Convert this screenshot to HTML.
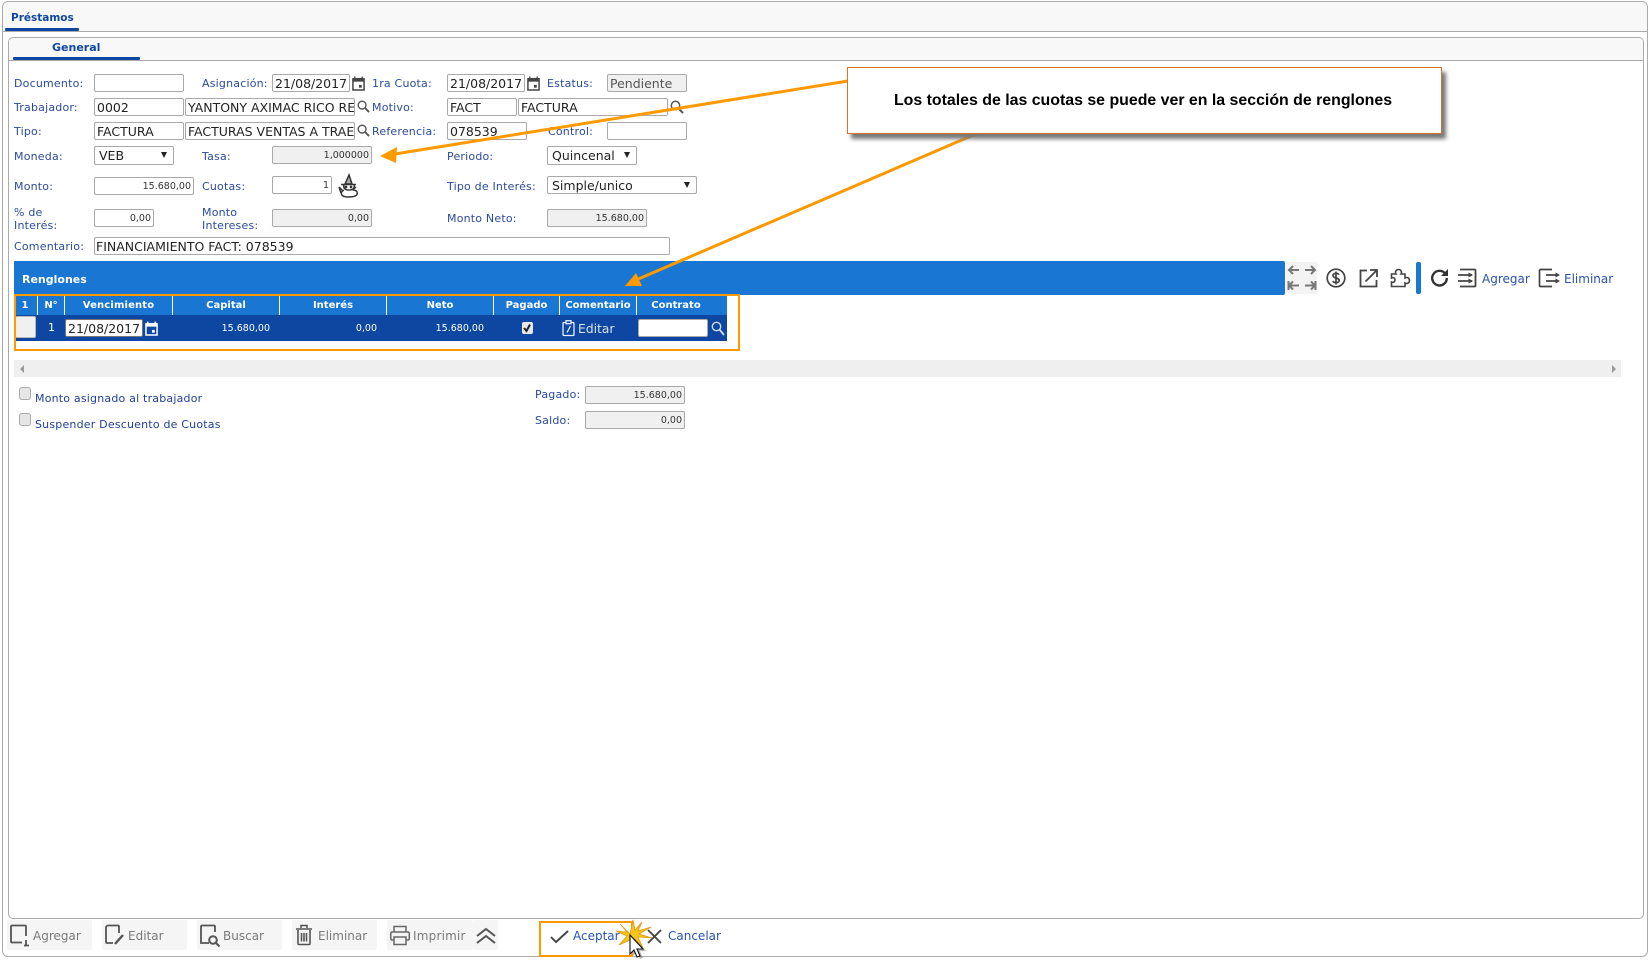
<!DOCTYPE html>
<html><head><meta charset="utf-8"><title>Préstamos</title>
<style>
html,body{margin:0;padding:0;background:#fff;width:1651px;height:960px;overflow:hidden}
body{position:relative;font-family:"DejaVu Sans","Liberation Sans",sans-serif}
.a{position:absolute}
.l{position:absolute;font-size:11px;line-height:14px;color:#2b4a9e;white-space:nowrap;letter-spacing:.2px;margin-top:1px}
.i{position:absolute;box-sizing:border-box;border:1px solid #a9a9a9;border-radius:2px;background:#fff;font-size:12.5px;line-height:17px;color:#222;padding-left:2px;white-space:nowrap;overflow:hidden}
.g{background:#f0f0f0;color:#555}
.n{text-align:right;font-size:9.5px;padding:0 2px 0 0;color:#333}
.s{position:absolute;box-sizing:border-box;border:1px solid #a9a9a9;border-radius:2px;background:#fff;font-size:12.5px;line-height:17px;color:#222;padding-left:4px;white-space:nowrap}
.s i{position:absolute;right:6px;top:5px;width:0;height:0;border-left:3.5px solid transparent;border-right:3.5px solid transparent;border-top:6px solid #222}
.th{position:absolute;top:296px;height:19px;line-height:20px;text-align:center;color:#fff;font-size:10px;font-weight:bold;background:#1976d2;border-right:1px solid #fff;box-sizing:border-box;white-space:nowrap}
.td{position:absolute;top:322px;line-height:14px;color:#fff;font-size:9.5px;text-align:right}
.b{position:absolute;top:920px;height:30px;background:#f5f5f5;border-radius:2px}
.bt{position:absolute;top:929px;font-size:12px;line-height:14px;color:#7a7a7a;white-space:nowrap}
svg{position:absolute;overflow:visible}
</style></head><body>

<!-- outer panel -->
<div class="a" style="left:2px;top:1px;width:1646px;height:956px;box-sizing:border-box;border:1px solid #aaa;border-radius:6px"></div>
<div class="a" style="left:3px;top:2px;width:1644px;height:29px;background:#f8f8f8;border-bottom:1px solid #aaa;border-radius:5px 5px 0 0"></div>
<div class="a" style="left:5px;top:28px;width:74px;height:3px;background:#0d47a1;border-radius:1px"></div>
<div class="a" style="left:11px;top:11px;font-size:10.5px;font-weight:bold;line-height:14px;color:#0d47a1">Préstamos</div>

<!-- inner panel -->
<div class="a" style="left:8px;top:37px;width:1636px;height:882px;box-sizing:border-box;border:1px solid #aaa;border-radius:5px"></div>
<div class="a" style="left:9px;top:38px;width:1634px;height:22px;background:#f8f8f8;border-bottom:1px solid #aaa;border-radius:4px 4px 0 0"></div>
<div class="a" style="left:13px;top:57px;width:127px;height:3px;background:#0d47a1;border-radius:1px"></div>
<div class="a" style="left:52px;top:41px;font-size:11px;font-weight:bold;line-height:14px;color:#0d47a1">General</div>

<!-- row 1 -->
<div class="l" style="left:14px;top:76px">Documento:</div>
<div class="i" style="left:94px;top:74px;width:90px;height:18px"></div>
<div class="l" style="left:202px;top:76px">Asignación:</div>
<div class="i" style="left:272px;top:74px;width:78px;height:18px">21/08/2017</div>
<svg style="left:352px;top:76px" width="13" height="15" viewBox="0 0 14 16"><path d="M1 3h12v12H1z" fill="#fff" stroke="#444" stroke-width="1.6"/><path d="M1 2h12v4H1z" fill="#444"/><path d="M3 0.5v3M11 .5v3" stroke="#444" stroke-width="1.4"/><rect x="7.5" y="9.5" width="3" height="3" fill="#444"/></svg>
<div class="l" style="left:372px;top:76px">1ra Cuota:</div>
<div class="i" style="left:447px;top:74px;width:78px;height:18px">21/08/2017</div>
<svg style="left:527px;top:76px" width="13" height="15" viewBox="0 0 14 16"><path d="M1 3h12v12H1z" fill="#fff" stroke="#444" stroke-width="1.6"/><path d="M1 2h12v4H1z" fill="#444"/><path d="M3 0.5v3M11 .5v3" stroke="#444" stroke-width="1.4"/><rect x="7.5" y="9.5" width="3" height="3" fill="#444"/></svg>
<div class="l" style="left:547px;top:76px">Estatus:</div>
<div class="i g" style="left:607px;top:74px;width:80px;height:18px">Pendiente</div>

<!-- row 2 -->
<div class="l" style="left:14px;top:100px">Trabajador:</div>
<div class="i" style="left:94px;top:98px;width:90px;height:18px">0002</div>
<div class="i" style="left:185px;top:98px;width:170px;height:18px">YANTONY AXIMAC RICO RE</div>
<svg style="left:357px;top:100px" width="13" height="13" viewBox="0 0 14 14"><circle cx="5.5" cy="5.5" r="4.2" fill="none" stroke="#555" stroke-width="1.5"/><path d="M8.5 8.5l4.5 4.5" stroke="#555" stroke-width="2"/></svg>
<div class="l" style="left:372px;top:100px">Motivo:</div>
<div class="i" style="left:447px;top:98px;width:70px;height:18px">FACT</div>
<div class="i" style="left:518px;top:98px;width:150px;height:18px">FACTURA</div>
<svg style="left:670px;top:100px" width="14" height="14" viewBox="0 0 14 14"><circle cx="5.5" cy="5.5" r="4.2" fill="none" stroke="#555" stroke-width="1.5"/><path d="M8.5 8.5l4.5 4.5" stroke="#555" stroke-width="2"/></svg>

<!-- row 3 -->
<div class="l" style="left:14px;top:124px">Tipo:</div>
<div class="i" style="left:94px;top:122px;width:90px;height:18px">FACTURA</div>
<div class="i" style="left:185px;top:122px;width:170px;height:18px">FACTURAS VENTAS A TRAE</div>
<svg style="left:357px;top:124px" width="13" height="13" viewBox="0 0 14 14"><circle cx="5.5" cy="5.5" r="4.2" fill="none" stroke="#555" stroke-width="1.5"/><path d="M8.5 8.5l4.5 4.5" stroke="#555" stroke-width="2"/></svg>
<div class="l" style="left:372px;top:124px">Referencia:</div>
<div class="i" style="left:447px;top:122px;width:80px;height:18px">078539</div>
<div class="l" style="left:548px;top:124px">Control:</div>
<div class="i" style="left:607px;top:122px;width:80px;height:18px"></div>

<!-- row 4 -->
<div class="l" style="left:14px;top:149px">Moneda:</div>
<div class="s" style="left:94px;top:146px;width:80px;height:19px">VEB<i></i></div>
<div class="l" style="left:202px;top:149px">Tasa:</div>
<div class="i g n" style="left:272px;top:146px;width:100px;height:18px">1,000000</div>
<div class="l" style="left:447px;top:149px">Periodo:</div>
<div class="s" style="left:547px;top:146px;width:90px;height:19px">Quincenal<i></i></div>

<!-- row 5 -->
<div class="l" style="left:14px;top:179px">Monto:</div>
<div class="i n" style="left:94px;top:177px;width:100px;height:18px">15.680,00</div>
<div class="l" style="left:202px;top:179px">Cuotas:</div>
<div class="i n" style="left:272px;top:176px;width:60px;height:18px">1</div>
<svg style="left:338px;top:174px" width="21" height="24" viewBox="0 0 21 24" fill="none" stroke="#333" stroke-width="1.5"><path d="M7 10L11 1l3 9z" fill="#aaa"/><path d="M3 10.5h15"/><path d="M6 11c-1 3 1 5 5 5s6-2 5-5"/><path d="M6 16c-4 2-4 7 4 7s10-2 9-5c-1-2-3-2-4-2"/><path d="M5 17l-4-4 2 6"/><path d="M14 16l4-3"/><circle cx="8" cy="13" r=".6"/><circle cx="13" cy="13" r=".6"/></svg>
<div class="l" style="left:447px;top:179px">Tipo de Interés:</div>
<div class="s" style="left:547px;top:176px;width:150px;height:18px">Simple/unico<i></i></div>

<!-- row 6 -->
<div class="l" style="left:14px;top:205px">% de</div>
<div class="l" style="left:14px;top:218px">Interés:</div>
<div class="i n" style="left:94px;top:209px;width:60px;height:18px">0,00</div>
<div class="l" style="left:202px;top:205px">Monto</div>
<div class="l" style="left:202px;top:218px">Intereses:</div>
<div class="i g n" style="left:272px;top:209px;width:100px;height:18px">0,00</div>
<div class="l" style="left:447px;top:211px">Monto Neto:</div>
<div class="i g n" style="left:547px;top:209px;width:100px;height:18px">15.680,00</div>

<!-- row 7 -->
<div class="l" style="left:14px;top:239px">Comentario:</div>
<div class="i" style="left:94px;top:237px;width:576px;height:18px;padding-left:1px">FINANCIAMIENTO FACT: 078539</div>

<!-- renglones bar -->
<div class="a" style="left:14px;top:261px;width:1271px;height:34px;background:#1976d2;border-radius:0 2px 2px 0"></div>
<div class="a" style="left:22px;top:273px;font-size:11px;font-weight:bold;line-height:14px;color:#fff">Renglones</div>

<!-- right icons -->
<div class="a" style="left:1286px;top:262px;width:31px;height:32px;background:#f3f3f3"></div>
<svg style="left:1287px;top:263px" width="30" height="30" viewBox="0 0 30 30" fill="none" stroke="#777" stroke-width="2"><path d="M12 7H2M6 3L2 7l4 4"/><path d="M18 7h10M24 3l4 4-4 4"/><path d="M1.5 18v9M12 22.500H2.500M6 18.500l-4 4 4 4"/><path d="M28.500 18v9M18 22.500h10M24 18.500l4 4-4 4"/></svg>
<svg style="left:1326px;top:268px" width="20" height="20" viewBox="0 0 20 20" fill="none" stroke="#444" stroke-width="1.7"><circle cx="10" cy="10" r="8.800"/><path d="M13 6.800c-.5-1-1.600-1.500-3-1.500-1.700 0-3 .8-3 2.300 0 3.300 6.200 1.500 6.200 4.800 0 1.500-1.400 2.300-3.200 2.300-1.500 0-2.700-.6-3.200-1.700M10 3.500v13"/></svg>
<svg style="left:1359px;top:268px" width="19" height="20" viewBox="0 0 19 20" fill="none" stroke="#444" stroke-width="1.8"><path d="M8 2.500H1.500v16h16V12"/><path d="M6.500 13.500L17 3M11 2h7v7"/></svg>
<svg style="left:1390px;top:268px" width="21" height="20" viewBox="0 0 21 20" fill="none" stroke="#444" stroke-width="1.6"><path d="M1.500 6h4.500c-1-1.500-.5-4.500 2.500-4.500S12 4.500 11 6h4v4c1.500-1 4.500-.5 4.500 2.500S16.500 16 15 15v3.500H1.500V14c2 1 3.500-.2 3.500-2S3.500 9 1.500 10z"/></svg>
<div class="a" style="left:1416px;top:262px;width:5px;height:32px;background:#1976d2;border-radius:2px"></div>
<svg style="left:1430px;top:268px" width="19" height="19" viewBox="0 0 19 19" fill="none"><path d="M15.500 6A7.300 7.300 0 1 0 16.800 10" stroke="#333" stroke-width="2.400"/><path d="M18 1v7h-7z" fill="#333"/></svg>
<svg style="left:1458px;top:268px" width="19" height="20" viewBox="0 0 19 20" fill="none" stroke="#444" stroke-width="1.8"><path d="M2 1.500h14.500a1 1 0 0 1 1 1v15a1 1 0 0 1-1 1H2"/><path d="M0 7h14M0 13h14"/><path d="M10.500 4.500L15 7l-4.500 2.500zM10.500 10.500L15 13l-4.500 2.500z" fill="#444" stroke="none"/></svg>
<div class="a" style="left:1482px;top:272px;font-size:12px;line-height:14px;color:#2b52b0">Agregar</div>
<svg style="left:1538px;top:268px" width="24" height="20" viewBox="0 0 24 20" fill="none" stroke="#444" stroke-width="1.7"><path d="M14 1.500H2.500a1 1 0 0 0-1 1v15a1 1 0 0 0 1 1H14"/><path d="M8 7h12M8 13h12"/><path d="M17.500 4.500L22 7l-4.500 2.500zM17.500 10.500L22 13l-4.500 2.500z" fill="#444" stroke="none"/></svg>
<div class="a" style="left:1564px;top:272px;font-size:12px;line-height:14px;color:#2b52b0">Eliminar</div>

<!-- table -->
<div class="th" style="left:14px;width:24px;padding-right:1px">1</div>
<div class="th" style="left:38px;width:27px">N°</div>
<div class="th" style="left:65px;width:108px;letter-spacing:.15px">Vencimiento</div>
<div class="th" style="left:173px;width:107px">Capital</div>
<div class="th" style="left:280px;width:107px">Interés</div>
<div class="th" style="left:387px;width:107px">Neto</div>
<div class="th" style="left:494px;width:66px">Pagado</div>
<div class="th" style="left:560px;width:77px">Comentario</div>
<div class="th" style="left:637px;width:90px;border-right:0;padding-right:12px">Contrato</div>
<div class="a" style="left:14px;top:315px;width:713px;height:26px;background:#0d47a1"></div>
<div class="a" style="left:15px;top:316px;width:21px;height:22px;background:#f0f0f0;border:1px solid #bbb;box-sizing:border-box;border-radius:2px"></div>
<div class="td" style="left:38px;width:17px;top:321px;font-size:11px">1</div>
<div class="i" style="left:65px;top:319px;width:78px;height:18px;border-color:#777">21/08/2017</div>
<svg style="left:145px;top:321px" width="13" height="15" viewBox="0 0 14 16"><path d="M1 3h12v12H1z" fill="none" stroke="#fff" stroke-width="1.600"/><path d="M1 2h12v4H1z" fill="#fff"/><path d="M3 .5v3M11 .5v3" stroke="#fff" stroke-width="1.400"/><rect x="7.500" y="9.500" width="3" height="3" fill="#fff"/></svg>
<div class="td" style="left:173px;width:97px">15.680,00</div>
<div class="td" style="left:280px;width:97px">0,00</div>
<div class="td" style="left:387px;width:97px">15.680,00</div>
<div class="a" style="left:522px;top:322px;width:11px;height:12px;background:#e8e8e8;border-radius:2px"></div>
<svg style="left:521px;top:322px" width="12" height="12" viewBox="0 0 12 12" fill="none" stroke="#222" stroke-width="2"><path d="M3 6l2.500 3L9 2.500"/></svg>
<svg style="left:562px;top:320px" width="13" height="16" viewBox="0 0 13 16" fill="none" stroke="#e8eef8" stroke-width="1.300"><rect x="1" y="2.500" width="11" height="13" rx="1"/><rect x="4" y=".7" width="5" height="3" fill="#0d47a1"/><path d="M8.500 6L5 12.500"/></svg>
<div class="a" style="left:578px;top:321px;font-size:12.5px;line-height:16px;letter-spacing:-.1px;color:#d8e2f0">Editar</div>
<div class="i" style="left:638px;top:319px;width:70px;height:18px"></div>
<svg style="left:711px;top:321px" width="14" height="15" viewBox="0 0 14 15"><circle cx="5.500" cy="5.500" r="4.200" fill="none" stroke="#cfdcf0" stroke-width="1.400"/><path d="M8.500 8.500l4.500 5.500" stroke="#cfdcf0" stroke-width="1.800"/></svg>
<div class="a" style="left:14px;top:294px;width:726px;height:57px;box-sizing:border-box;border:2px solid #f90"></div>

<!-- scroll -->
<div class="a" style="left:14px;top:360px;width:1607px;height:17px;background:#efefef"></div>
<div class="a" style="left:20px;top:365px;width:0;height:0;border-top:4px solid transparent;border-bottom:4px solid transparent;border-right:4px solid #999"></div>
<div class="a" style="left:1612px;top:365px;width:0;height:0;border-top:4px solid transparent;border-bottom:4px solid transparent;border-left:4px solid #999"></div>

<!-- checks -->
<div class="a" style="left:19px;top:387px;width:12px;height:13px;box-sizing:border-box;border:1px solid #aaa;border-radius:3px;background:#e6e6e6"></div>
<div class="l" style="left:35px;top:391px;color:#1f3f96">Monto asignado al trabajador</div>
<div class="a" style="left:19px;top:413px;width:12px;height:13px;box-sizing:border-box;border:1px solid #aaa;border-radius:3px;background:#e6e6e6"></div>
<div class="l" style="left:35px;top:417px;color:#1f3f96">Suspender Descuento de Cuotas</div>
<div class="l" style="left:535px;top:387px">Pagado:</div>
<div class="i g n" style="left:586px;top:386px;width:100px;height:18px;margin-left:-1px">15.680,00</div>
<div class="l" style="left:535px;top:413px">Saldo:</div>
<div class="i g n" style="left:586px;top:411px;width:100px;height:18px;margin-left:-1px">0,00</div>

<!-- bottom bar -->
<div class="b" style="left:7px;width:85px"></div>
<div class="b" style="left:102px;width:85px"></div>
<div class="b" style="left:197px;width:85px"></div>
<div class="b" style="left:292px;width:85px"></div>
<div class="b" style="left:387px;width:86px"></div>
<div class="b" style="left:473px;width:25px"></div>
<svg style="left:10px;top:924px" width="20" height="23" viewBox="0 0 20 23" fill="none" stroke="#555" stroke-width="1.800"><path d="M16 12V2.500a1 1 0 0 0-1-1H2a1 1 0 0 0-1 1v15a1 1 0 0 0 1 1h10"/><path d="M14 21.500h5M16 16v6"/></svg>
<div class="bt" style="left:33px">Agregar</div>
<svg style="left:105px;top:924px" width="20" height="22" viewBox="0 0 20 22" fill="none" stroke="#555" stroke-width="1.800"><path d="M14 9V2.500a1 1 0 0 0-1-1H3a2 2 0 0 0-2 2V18a1 1 0 0 0 1 1h6"/><path d="M10 20l8-9" stroke-width="2.400"/></svg>
<div class="bt" style="left:128px">Editar</div>
<svg style="left:200px;top:924px" width="21" height="23" viewBox="0 0 21 23" fill="none" stroke="#555" stroke-width="1.800"><path d="M15 8V2.500a1 1 0 0 0-1-1H2a1 1 0 0 0-1 1V19h8"/><circle cx="13" cy="16" r="3.800" stroke-width="2"/><path d="M16 19l3.500 3.500" stroke-width="2"/></svg>
<div class="bt" style="left:223px">Buscar</div>
<svg style="left:295px;top:924px" width="18" height="22" viewBox="0 0 18 22" fill="none" stroke="#555" stroke-width="1.600"><path d="M1 5h16M6 4V1.500h6V4"/><path d="M3 6v13.500a1 1 0 0 0 1 1h10a1 1 0 0 0 1-1V6"/><path d="M6.500 9v8.500M9 9v8.500M11.500 9v8.500"/></svg>
<div class="bt" style="left:318px">Eliminar</div>
<svg style="left:390px;top:925px" width="20" height="21" viewBox="0 0 20 21" fill="none" stroke="#666" stroke-width="1.500"><path d="M4 7V1.500h12V7"/><path d="M4 15H2a1.500 1.500 0 0 1-1.200-1.500V8.500A1.500 1.500 0 0 1 2 7h16a1.500 1.500 0 0 1 1.300 1.500v5A1.500 1.500 0 0 1 18 15h-2"/><path d="M4 12h12v7.500H4z"/></svg>
<div class="bt" style="left:413px;letter-spacing:.2px">Imprimir</div>
<svg style="left:476px;top:927px" width="20" height="17" viewBox="0 0 20 17" fill="none" stroke="#555" stroke-width="2"><path d="M1 9l9-7 9 7M1 16l9-7 9 7"/></svg>

<!-- aceptar / cancelar -->
<div class="a" style="left:539px;top:921px;width:94px;height:36px;box-sizing:border-box;border:2px solid #f90"></div>
<svg style="left:550px;top:930px" width="19" height="13" viewBox="0 0 19 13" fill="none" stroke="#444" stroke-width="1.900"><path d="M1 7l5 5L18 1"/></svg>
<div class="a" style="left:573px;top:929px;font-size:12px;line-height:14px;color:#2b52b0">Aceptar</div>
<svg style="left:647px;top:929px" width="15" height="15" viewBox="0 0 15 15" fill="none" stroke="#444" stroke-width="1.900"><path d="M1 1l13 13M14 1L1 14"/></svg>
<div class="a" style="left:668px;top:929px;font-size:12px;line-height:14px;color:#2b52b0">Cancelar</div>

<!-- arrows -->
<svg style="left:0;top:0" width="1651" height="960" viewBox="0 0 1651 960"><g fill="#f90" stroke="none"><path d="M380 156l17-9-1 16z"/><path d="M625 286l11-13 6 13z"/></g><g stroke="#f90" stroke-width="3" fill="none"><path d="M395 154L848 81"/><path d="M636 280L985 130"/></g></svg>

<!-- callout -->
<div class="a" style="left:847px;top:67px;width:595px;height:67px;box-sizing:border-box;border:1px solid #d9732a;background:#fff;box-shadow:4px 5px 4px #777;text-align:center;font-family:'Liberation Sans',sans-serif;font-weight:bold;font-size:15.9px;line-height:65px;padding-right:3px;color:#000">Los totales de las cuotas se puede ver en la sección de renglones</div>

<!-- star and cursor -->
<svg style="left:615px;top:919px" width="40" height="40" viewBox="0 0 40 40"><polygon points="15,15 18,1 20,11 27,3 23,12 36,8 24,15 37,19 23,18 28,29 20,20 17,31 15,21 4,26 12,17 1,12 12,13 5,5" fill="#f5c518" stroke="#e09a10" stroke-width=".8"/><path d="M16 17v19l4-4 3 7 3-1-3-7h6z" fill="#666" opacity=".45" transform="translate(2 1)"/><path d="M15 16v19l4-4 3 7 3-1-3-7h6z" fill="#fff" stroke="#111" stroke-width="1.100"/></svg>

</body></html>
